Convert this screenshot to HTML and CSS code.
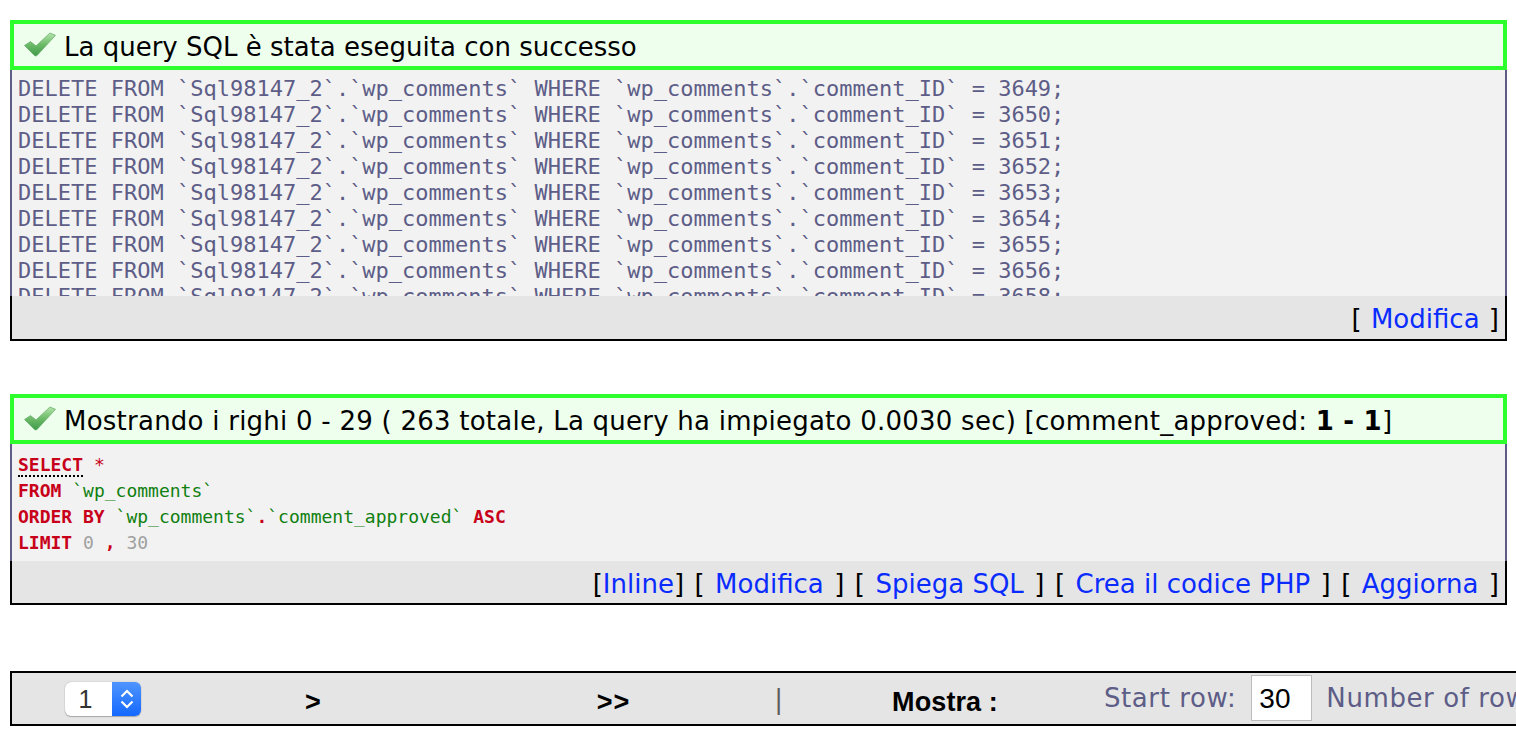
FILE: index.html
```html
<!DOCTYPE html>
<html lang="it">
<head>
<meta charset="utf-8">
<title>phpMyAdmin</title>
<link rel="stylesheet" href="styles.css">
</head>
<body>
<svg class="defs" width="0" height="0" aria-hidden="true">
  <defs>
    <linearGradient id="chk" x1="0" y1="0" x2="0" y2="1">
      <stop offset="0" stop-color="#b4e4ac"/>
      <stop offset="0.5" stop-color="#6dbb68"/>
      <stop offset="1" stop-color="#3f9a4a"/>
    </linearGradient>
    <symbol id="check" viewBox="0 0 32 26" preserveAspectRatio="none">
      <path d="M0.500 14 L6.500 10 L12 14.500 L26 1 L31.500 3.500 L13 24.500 Q11.500 25.500 10.500 24.500 Z" fill="url(#chk)" stroke="#5fa865" stroke-width="0.7"/>
    </symbol>
  </defs>
</svg>

<div class="msg"><svg class="ico"><use href="#check"/></svg><span>La query SQL è stata eseguita con successo</span></div>
<div class="sql plain"><div>DELETE FROM `Sql98147_2`.`wp_comments` WHERE `wp_comments`.`comment_ID` = 3649;</div><div>DELETE FROM `Sql98147_2`.`wp_comments` WHERE `wp_comments`.`comment_ID` = 3650;</div><div>DELETE FROM `Sql98147_2`.`wp_comments` WHERE `wp_comments`.`comment_ID` = 3651;</div><div>DELETE FROM `Sql98147_2`.`wp_comments` WHERE `wp_comments`.`comment_ID` = 3652;</div><div>DELETE FROM `Sql98147_2`.`wp_comments` WHERE `wp_comments`.`comment_ID` = 3653;</div><div>DELETE FROM `Sql98147_2`.`wp_comments` WHERE `wp_comments`.`comment_ID` = 3654;</div><div>DELETE FROM `Sql98147_2`.`wp_comments` WHERE `wp_comments`.`comment_ID` = 3655;</div><div>DELETE FROM `Sql98147_2`.`wp_comments` WHERE `wp_comments`.`comment_ID` = 3656;</div><div>DELETE FROM `Sql98147_2`.`wp_comments` WHERE `wp_comments`.`comment_ID` = 3658;</div></div>
<div class="tools tools-first">[ <a href="#">Modifica</a> ]</div>

<div class="msg msg-second"><svg class="ico"><use href="#check"/></svg><span class="spaced">Mostrando i righi 0 - 29 ( 263 totale, La query ha impiegato 0.0030 sec) [comment_approved: <b>1 - 1</b>]</span></div>
<div class="sql coded"><div><b class="kw doc">SELECT</b> <span class="kw">*</span></div><div><b class="kw">FROM</b> <span class="id">`wp_comments`</span></div><div><b class="kw">ORDER BY</b> <span class="id">`wp_comments`</span><b class="kw">.</b><span class="id">`comment_approved`</span> <b class="kw">ASC</b></div><div><b class="kw">LIMIT</b> <span class="num">0</span> <b class="kw">,</b> <span class="num">30</span></div></div>
<div class="tools tools-second">[<a href="#">Inline</a>] [ <a href="#">Modifica</a> ] [ <a href="#">Spiega SQL</a> ] [ <a href="#">Crea il codice PHP</a> ] [ <a href="#">Aggiorna</a> ]</div>

<div class="nav">
  <div class="cell cell-select">
    <span class="select"><span class="select-val">1</span><span class="select-btn"><svg width="16" height="24" viewBox="0 0 16 24"><path d="M2.500 9.500 L8 4 L13.500 9.500 M2.500 14.500 L8 20 L13.500 14.500" fill="none" stroke="#fff" stroke-width="2.200"/></svg></span></span>
  </div>
  <b class="cell cell-next">&gt;</b>
  <b class="cell cell-last">&gt;&gt;</b>
  <span class="cell cell-sep">|</span>
  <b class="cell cell-show">Mostra :</b>
  <span class="cell cell-form"><span class="label">Start row:</span><span class="input">30</span><span class="label">Number of rows:</span></span>
</div>
</body>
</html>
```
FILE: styles.css
```css
html, body {
  margin: 0;
  padding: 0;
  overflow: hidden;
  height: 732px;
  background: #fff;
}
body {
  padding: 20px 9px 0 10px;
  width: 1497px;
  font-family: "DejaVu Sans", sans-serif;
  font-size: 26px;
  color: #000;
}
.defs { position: absolute; }
.msg {
  box-sizing: border-box;
  height: 50px;
  border: 4px solid #2cff2c;
  background: #eeffee;
  display: flex;
  align-items: center;
  padding: 3px 0 0 10px;
  white-space: nowrap;
}
.msg-second { margin-top: 53px; }
.spaced { letter-spacing: 0.24px; }
.ico { width: 32px; height: 25px; margin: -5px 8px 0 0; flex: none; }
.sql {
  box-sizing: border-box;
  border-left: 2px solid #5d5d87;
  border-right: 2px solid #5d5d87;
  background: #f2f2f2;
  font-family: "DejaVu Sans Mono", monospace;
  line-height: 26px;
  padding: 6px 6px 0;
  overflow: hidden;
  white-space: pre;
}
.plain { height: 226px; color: #5d5d87; font-size: 22px; }
.coded { height: 117px; padding-top: 8px; color: #5d5d87; font-size: 18px; }
.kw { color: #c80019; }
.id { color: #108010; }
.num { color: #a0a0a0; }
.doc { border-bottom: 2px dotted #000; }
.tools {
  box-sizing: border-box;
  background: #e5e5e5;
  border: 2px solid #000;
  border-top: 0;
  text-align: right;
  padding: 3px 6px 0 0;
  line-height: 41px;
  white-space: nowrap;
  word-spacing: 2.200px;
}
.tools-first { height: 45px; word-spacing: 1px; }
.tools-second { height: 44px; }
.tools a { color: #0a2cff; text-decoration: none; word-spacing: 0; }
.nav {
  box-sizing: border-box;
  margin-top: 66px;
  width: 1520px;
  height: 55px;
  background: #e5e5e5;
  border: 2px solid #000;
  display: flex;
  align-items: center;
  white-space: nowrap;
}
.cell { flex: none; }
.cell-select { margin-left: 53px; display: flex; }
.select {
  display: flex;
  width: 76px;
  height: 34px;
  border-radius: 6px;
  overflow: hidden;
  box-shadow: 0 0 1px #888, 0 1px 1px #aaa;
  background: #fff;
}
.select-val { box-sizing: border-box; width: 47px; padding-right: 6px; text-align: center; font-size: 25px; font-family: "Liberation Sans", sans-serif; line-height: 34px; color: #333; }
.select-btn {
  width: 29px;
  background: linear-gradient(#4f95ff, #1468ff);
  display: flex;
  align-items: center;
  justify-content: center;
}
.cell-next, .cell-last, .cell-show {
  font-family: "Liberation Sans", sans-serif;
  font-size: 27px;
  padding-top: 8px;
}
.cell-next { margin-left: 164px; }
.cell-last { margin-left: 276px; letter-spacing: 1px; }
.cell-sep { margin-left: 144px; color: #5d5d5d; }
.cell-show { margin-left: 109px; letter-spacing: 0.1px; }
.cell-form { margin-left: 106px; color: #5d5d87; display: flex; align-items: center; }
.label { letter-spacing: 0.6px; padding-bottom: 1px; }
.input {
  box-sizing: border-box;
  width: 61px;
  height: 46px;
  margin: -1px 14px 0 15px;
  padding-left: 7px;
  background: #fff;
  border: 1px solid #bbb;
  color: #000;
  font-family: "Liberation Sans", sans-serif;
  font-size: 28px;
  line-height: 46px;
}
```
